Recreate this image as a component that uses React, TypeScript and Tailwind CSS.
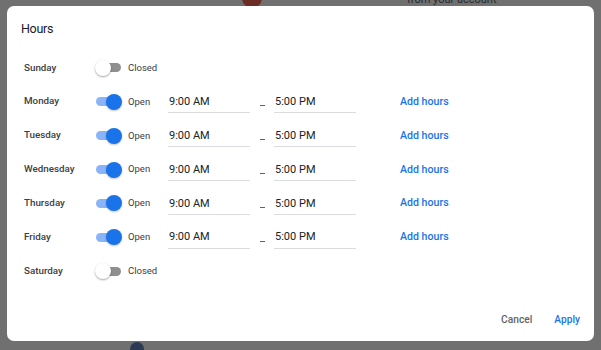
const days = [
  { name: "Sunday", open: false },
  { name: "Monday", open: true },
  { name: "Tuesday", open: true },
  { name: "Wednesday", open: true },
  { name: "Thursday", open: true },
  { name: "Friday", open: true },
  { name: "Saturday", open: false },
];

function Toggle({ on }: { on: boolean }) {
  return (
    <div className="relative w-[27px] h-[16px] flex items-center">
      <div
        className={`ml-[1px] w-[25px] h-[9px] rounded-full ${on ? "bg-[#8ab4f8]" : "bg-[#8f8f8f]"}`}
      />
      <div
        className={`absolute top-0 w-[16px] h-[16px] rounded-full ${
          on
            ? "right-0 bg-[#1a73e8] shadow-[0_1px_2px_rgba(0,0,0,0.25)]"
            : "left-0 bg-white shadow-[0_1px_2px_rgba(0,0,0,0.35)]"
        }`}
      />
    </div>
  );
}

function TimeField({ value }: { value: string }) {
  return (
    <div className="w-[82px] h-[21px] border-b border-[#dadce0] flex items-center pl-[1px] text-[11px] text-[#202124]">
      {value}
    </div>
  );
}

export default function App() {
  return (
    <div
      className="relative w-[601px] h-[350px] overflow-hidden bg-[#707070] pt-[6px] pl-[7px]"
      style={{ fontFamily: "Roboto, 'Liberation Sans', sans-serif" }}
    >
      {/* page behind the scrim */}
      <div className="absolute top-[-12px] left-[242px] w-[20px] h-[20px] rounded-full bg-[#6b2c26]" />
      <div className="absolute top-[-6px] left-[407px] text-[11px] leading-[12px] text-[#2a2a2a]">
        from your account
      </div>
      <div className="absolute bottom-[-6px] left-[130px] w-[14px] h-[14px] rounded-full bg-[#2c3a55]" />

      <div className="relative w-[587px] h-[335px] bg-white rounded-[7px] flex flex-col">
        <div className="pl-[14px] pt-[15px] h-[45px] text-[12.5px] leading-[16px] text-[#202124] tracking-[-0.3px]">
          Hours
        </div>

        <div className="flex flex-col pl-[17px]">
          {days.map((d) => (
            <div key={d.name} className="h-[33.87px] flex items-center">
              <div className="w-[71px] text-[9.8px] font-medium text-[#3c4043]">
                {d.name}
              </div>
              <Toggle on={d.open} />
              <div className="ml-[6px] w-[40px] text-[9.5px] text-[#3c4043]">
                {d.open ? "Open" : "Closed"}
              </div>
              {d.open && (
                <div className="flex items-center pt-[2px]">
                  <TimeField value="9:00 AM" />
                  <div className="w-[24px] flex justify-center pt-[6px]">
                    <div className="w-[5px] h-px bg-[#5f6368]" />
                  </div>
                  <TimeField value="5:00 PM" />
                  <div className="ml-[44px] text-[10.6px] font-medium text-[#1a73e8] -mt-[2px]">
                    Add hours
                  </div>
                </div>
              )}
            </div>
          ))}
        </div>

        <div className="mt-auto mb-[14px] flex justify-end items-center pr-[14px] gap-[22px] text-[10.2px] font-medium">
          <button className="text-[#5f6368]">Cancel</button>
          <button className="text-[#1a73e8]">Apply</button>
        </div>
      </div>
    </div>
  );
}
